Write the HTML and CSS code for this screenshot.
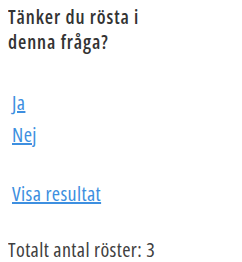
FILE: index.html
```html
<!DOCTYPE html>
<html lang="sv">
<head>
  <meta charset="UTF-8" />
  <title>Omröstning</title>
  <link rel="stylesheet" href="styles.css">
</head>
<body>
  <div class="poll">
    <h3 class="poll-question">Tänker du rösta i denna fråga?</h3>
    <ul class="poll-answers">
      <li><a href="#">Ja</a></li>
      <li><a href="#">Nej</a></li>
    </ul>
    <p class="poll-results"><a href="#">Visa resultat</a></p>
    <p class="poll-total">Totalt antal röster: 3</p>
  </div>
</body>
</html>
```

FILE: styles.css
```css
body {
  margin: 5px 8px 0;
  font-family: "Open Sans", sans-serif;
  font-stretch: condensed;
  letter-spacing: 0.4px;
  color: #404040;
  background: #fff;
}

.poll {
  width: 160px;
}

.poll-question {
  max-width: 140px;
  font-size: 19px;
  font-weight: 600;
  letter-spacing: 0.9px;
  line-height: 25px;
  margin: 0;
  color: #333;
}

.poll-answers {
  list-style: none;
  margin: 32px 0 0;
  padding: 0 0 0 4px;
}

.poll-answers li {
  font-size: 20px;
  line-height: 32px;
}

a {
  color: #3d8fe0;
}

.poll-results {
  font-size: 20px;
  line-height: 32px;
  margin: 27px 0 0 4px;
}

.poll-total {
  font-size: 20px;
  line-height: 24px;
  margin: 28px 0 0;
}
```
